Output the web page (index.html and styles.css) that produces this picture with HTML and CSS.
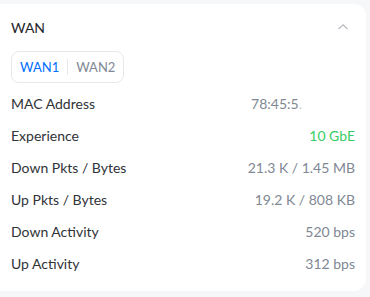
FILE: index.html
```html
<!DOCTYPE html>
<html lang="en">
<head>
    <meta charset="UTF-8">
    <title>WAN</title>
    <link rel="stylesheet" href="styles.css">
</head>
<body>
    <div class="panel">
        <div class="panel-header">
            <span class="panel-title">WAN</span>
            <svg class="chevron" width="12" height="8" viewBox="0 0 12 8">
                <path d="M1.5 6 L6 1.8 L10.5 6" fill="none" stroke="#b6bac0" stroke-width="1.2"/>
            </svg>
        </div>

        <div class="tabs">
            <span class="tab active">WAN1</span>
            <span class="tab-sep"></span>
            <span class="tab">WAN2</span>
        </div>

        <div class="rows">
            <div class="row">
                <span class="label">MAC Address</span>
                <span class="value mac">78:45:5<span class="fade">.</span></span>
            </div>
            <div class="row">
                <span class="label">Experience</span>
                <span class="value good">10 GbE</span>
            </div>
            <div class="row">
                <span class="label">Down Pkts / Bytes</span>
                <span class="value">21.3 K / 1.45 MB</span>
            </div>
            <div class="row">
                <span class="label">Up Pkts / Bytes</span>
                <span class="value">19.2 K / 808 KB</span>
            </div>
            <div class="row">
                <span class="label">Down Activity</span>
                <span class="value">520 bps</span>
            </div>
            <div class="row">
                <span class="label">Up Activity</span>
                <span class="value">312 bps</span>
            </div>
        </div>
    </div>
</body>
</html>
```

FILE: styles.css
```css
body {
    margin: 0;
    padding: 4px 4px 6px 0;
    background: #f6f7f8;
    font-family: 'Lato', 'Noto Sans', sans-serif;
    font-size: 14px;
    color: #212327;
}

.panel {
    background: #fff;
    border-radius: 0 12px 12px 0;
    padding: 0 11px 10px 11px;
    height: 287px;
    box-sizing: border-box;
}

.panel-header {
    display: flex;
    justify-content: space-between;
    align-items: center;
    height: 47px;
}

.panel-title {
    font-size: 14px;
    color: #212327;
}

.chevron {
    margin-right: 6px;
    margin-top: -2px;
}

.tabs {
    display: inline-flex;
    align-items: center;
    height: 32px;
    padding: 0 8px;
    border: 1px solid #e7e8ea;
    border-radius: 8px;
    box-sizing: border-box;
    font-size: 13px;
}

.tab {
    color: #808893;
}

.tab.active {
    color: #006fff;
}

.tab-sep {
    width: 1px;
    height: 16px;
    background: #e7e8ea;
    margin: 0 8px;
}

.rows {
    margin-top: 4px;
}

.row {
    display: flex;
    justify-content: space-between;
    align-items: center;
    height: 32px;
}

.label {
    color: #303338;
}

.value {
    color: #808893;
}

.value.mac {
    margin-right: 53px;
}

.value.good {
    color: #38cc65;
}

.fade {
    color: #c8ccd1;
}
```
